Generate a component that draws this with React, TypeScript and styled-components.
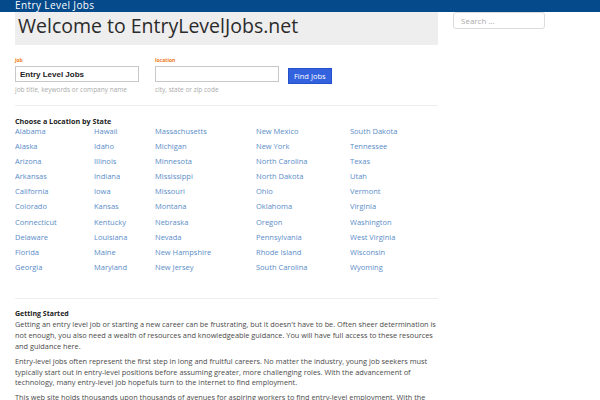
import styled, { createGlobalStyle } from "styled-components";

const GlobalStyle = createGlobalStyle`
  html, body {
    margin: 0;
    padding: 0;
    background: #fff;
    font-family: "Open Sans", "DejaVu Sans", sans-serif;
  }
`;

const states = [
  "Alabama", "Alaska", "Arizona", "Arkansas", "California", "Colorado", "Connecticut", "Delaware", "Florida", "Georgia",
  "Hawaii", "Idaho", "Illinois", "Indiana", "Iowa", "Kansas", "Kentucky", "Louisiana", "Maine", "Maryland",
  "Massachusetts", "Michigan", "Minnesota", "Mississippi", "Missouri", "Montana", "Nebraska", "Nevada", "New Hampshire", "New Jersey",
  "New Mexico", "New York", "North Carolina", "North Dakota", "Ohio", "Oklahoma", "Oregon", "Pennsylvania", "Rhode Island", "South Carolina",
  "South Dakota", "Tennessee", "Texas", "Utah", "Vermont", "Virginia", "Washington", "West Virginia", "Wisconsin", "Wyoming",
];

const TopBar = styled.header`
  height: 12px;
  padding-left: 15px;
  background: #054a8b;
  color: #fff;
  font-size: 10px;
  letter-spacing: 0.4px;
  line-height: 11px;
`;

const Layout = styled.div`
  display: flex;
  gap: 15px;
  padding: 0 15px;
`;

const Main = styled.main`
  width: 423px;
`;

const Sidebar = styled.aside`
  width: 92px;
`;

const SearchBox = styled.input`
  display: block;
  box-sizing: border-box;
  width: 92px;
  height: 17px;
  margin: 0;
  padding: 0 7px;
  border: 1px solid #dcdcdc;
  border-radius: 3px;
  font-family: "Open Sans", sans-serif;
  font-size: 8px;
  color: #555;

  &::placeholder {
    color: #aaa;
  }
`;

const Hero = styled.div`
  height: 33px;
  padding-left: 3px;
  background: #eeeeee;
`;

const Title = styled.h1`
  margin: 0;
  color: #2b2b2b;
  font-size: 19.5px;
  font-weight: 400;
  line-height: 28px;
`;

const SearchForm = styled.form`
  display: flex;
  align-items: flex-start;
  gap: 16px;
  margin-top: 11px;
  padding-bottom: 11px;
  border-bottom: 1px solid #eeeeee;
`;

const Field = styled.div`
  display: flex;
  flex-direction: column;
  width: 124px;
`;

const Label = styled.label`
  color: #f07a22;
  font-size: 5px;
  font-weight: 700;
  line-height: 8px;
`;

const TextInput = styled.input`
  box-sizing: border-box;
  width: 124px;
  height: 16px;
  margin-top: 2px;
  padding: 0 4px;
  border: 1px solid #c8c8c8;
  font-family: "Liberation Sans", Arial, sans-serif;
  font-size: 8px;
  font-weight: 700;
  color: #222;
`;

const Hint = styled.span`
  margin-top: 3px;
  color: #aaaaaa;
  font-size: 6.5px;
  line-height: 9px;
`;

const FindButton = styled.button`
  height: 16px;
  margin-top: 12px;
  margin-left: -7px;
  padding: 0 5px;
  border: 1px solid #2450c8;
  background: #3362de;
  color: #fff;
  font-family: "Open Sans", sans-serif;
  font-size: 7.5px;
`;

const StatesSection = styled.section`
  padding: 10px 0 21px;
  border-bottom: 1px solid #eeeeee;
`;

const SectionTitle = styled.h3`
  margin: 0;
  color: #222;
  font-size: 7.2px;
  font-weight: 700;
  line-height: 10px;
`;

const StateGrid = styled.div`
  display: grid;
  grid-template-columns: 79px 61px 101px 94px auto;
  grid-template-rows: repeat(10, 15.1px);
  grid-auto-flow: column;
  align-items: start;
`;

const StateLink = styled.a`
  color: #5b8dc8;
  font-size: 7.5px;
  line-height: 10px;
  text-decoration: none;
`;

const Article = styled.section`
  padding-top: 9px;
  color: #4a4a4a;
  font-size: 7.35px;
  line-height: 10.9px;
`;

const ArticleTitle = styled.h4`
  margin: 0;
  color: #222;
  font-size: 7px;
  font-weight: 700;
  line-height: 11px;
`;

const Paragraph = styled.p`
  margin: 0 0 4px;
`;

export default function App() {
  return (
    <>
      <GlobalStyle />
      <TopBar>Entry Level Jobs</TopBar>
      <Layout>
        <Main>
          <Hero>
            <Title>Welcome to EntryLevelJobs.net</Title>
          </Hero>
          <SearchForm onSubmit={(e) => e.preventDefault()}>
            <Field>
              <Label>job</Label>
              <TextInput defaultValue="Entry Level Jobs" />
              <Hint>job title, keywords or company name</Hint>
            </Field>
            <Field>
              <Label>location</Label>
              <TextInput defaultValue="" />
              <Hint>city, state or zip code</Hint>
            </Field>
            <FindButton type="submit">Find Jobs</FindButton>
          </SearchForm>
          <StatesSection>
            <SectionTitle>Choose a Location by State</SectionTitle>
            <StateGrid>
              {states.map((s) => (
                <StateLink key={s} href="#">{s}</StateLink>
              ))}
            </StateGrid>
          </StatesSection>
          <Article>
            <ArticleTitle>Getting Started</ArticleTitle>
            <Paragraph>
              Getting an entry level job or starting a new career can be frustrating, but it doesn't have to be. Often sheer determination is not enough, you also need a wealth of resources and knowledgeable guidance. You will have full access to these resources and guidance here.
            </Paragraph>
            <Paragraph>
              Entry-level jobs often represent the first step in long and fruitful careers. No matter the industry, young job seekers must typically start out in entry-level positions before assuming greater, more challenging roles. With the advancement of technology, many entry-level job hopefuls turn to the internet to find employment.
            </Paragraph>
            <Paragraph>
              This web site holds thousands upon thousands of avenues for aspiring workers to find entry-level employment. With the
            </Paragraph>
          </Article>
        </Main>
        <Sidebar>
          <SearchBox placeholder="Search ..." />
        </Sidebar>
      </Layout>
    </>
  );
}
